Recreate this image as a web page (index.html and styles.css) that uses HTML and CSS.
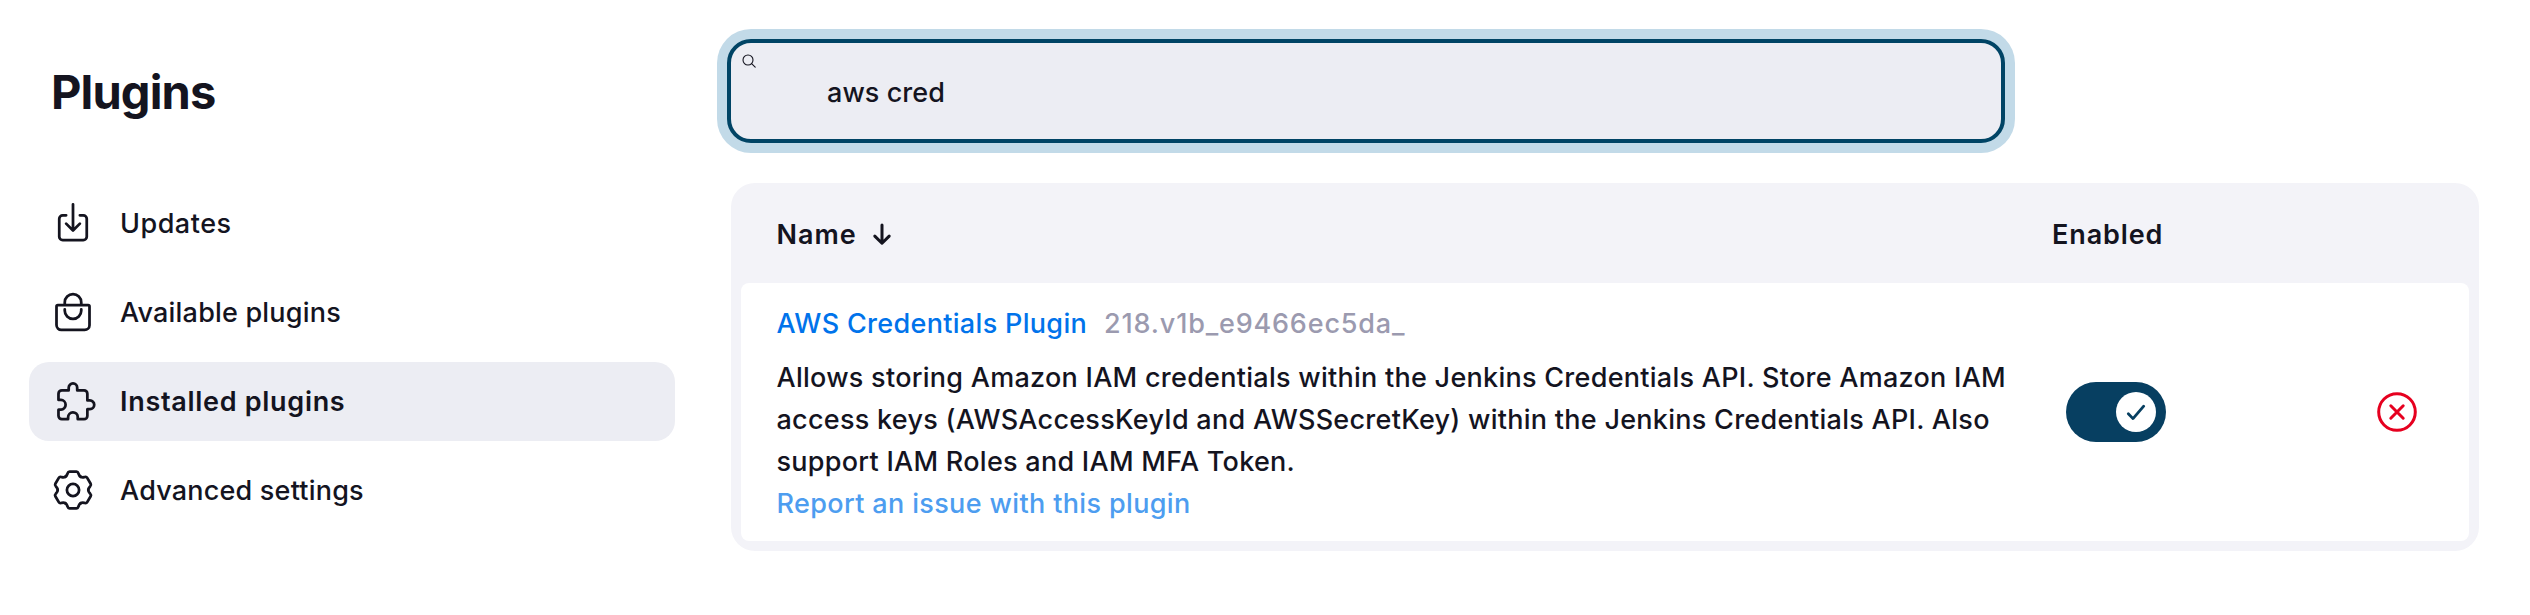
FILE: index.html
```html
<!DOCTYPE html>
<html lang="en">
<head>
<meta charset="utf-8">
<title>Plugins</title>
<link rel="stylesheet" href="styles.css">
</head>
<body>
<div class="page">
  <aside class="sidebar">
    <h1 class="sidebar-title">Plugins</h1>
    <nav class="tasks">
      <a class="task task-updates">
        <svg class="task-icon" viewBox="0 0 512 512"><g transform="translate(0 -9)"><path d="M336 176h40a40 40 0 0140 40v208a40 40 0 01-40 40H136a40 40 0 01-40-40V216a40 40 0 0140-40h40"/><path d="M176 272l80 80 80-80M256 48v288"/></g></svg>
        <span class="task-label">Updates</span>
      </a>
      <a class="task">
        <svg class="task-icon" viewBox="0 0 512 512"><path d="M80 176a16 16 0 00-16 16v216c0 30.24 25.76 56 56 56h272c30.24 0 56-24.51 56-54.75V192a16 16 0 00-16-16zM160 176v-32a96 96 0 0196-96h0a96 96 0 0196 96v32"/><path d="M160 224v16a96 96 0 0096 96h0a96 96 0 0096-96v-16"/></svg>
        <span class="task-label">Available plugins</span>
      </a>
      <a class="task task-active">
        <svg class="task-icon" viewBox="0 0 512 512"><path transform="translate(39 4)" d="M413.66 246.1H386a2 2 0 01-2-2v-77.24A38.86 38.86 0 00345.14 128H267.9a2 2 0 01-2-2V98.34c0-27.14-21.5-49.86-48.64-50.33a49.53 49.53 0 00-50.4 49.51V126a2 2 0 01-2 2H87.62A39.74 39.74 0 0048 167.62V238a2 2 0 002 2h26.91c29.37 0 53.68 25.48 54.09 54.85.42 29.87-23.51 57.15-53.29 57.15H50a2 2 0 00-2 2v70.38A39.74 39.74 0 0087.62 464H158a2 2 0 002-2v-20.93c0-30.28 24.75-56.35 55-57.06 30.1-.7 57 20.31 57 50.28V462a2 2 0 002 2h71.14A38.86 38.86 0 00384 425.14v-78a2 2 0 012-2h28.48c27.63 0 49.52-22.67 49.52-50.4s-23.2-48.64-50.34-48.64z"/></svg>
        <span class="task-label">Installed plugins</span>
      </a>
      <a class="task">
        <svg class="task-icon" viewBox="-256 -256 512 512">
          <circle r="71"/>
          <path id="tooth" d="M-89 -154C-70 -165 -68 -178 -63 -194C-58 -211 -50 -214 -40 -214H40C50 -214 58 -211 63 -194C68 -178 70 -165 89 -154"/>
          <use href="#tooth" transform="rotate(60)"/>
          <use href="#tooth" transform="rotate(120)"/>
          <use href="#tooth" transform="rotate(180)"/>
          <use href="#tooth" transform="rotate(240)"/>
          <use href="#tooth" transform="rotate(300)"/>
        </svg>
        <span class="task-label">Advanced settings</span>
      </a>
    </nav>
  </aside>

  <main class="main">
    <div class="search">
      <svg class="search-icon" viewBox="0 0 14 14"><circle cx="6" cy="6" r="5"/><path d="M9.6 9.6L13.2 13.2"/></svg>
      <input class="search-input" type="text" value="aws cred" aria-label="Search">
    </div>

    <section class="table">
      <header class="table-head">
        <div class="head-name">
          <span class="name-label">Name</span>
          <svg class="sort-icon" viewBox="0 0 20 24"><path d="M10 2v18M2.8 13.1L10 20.3L17.2 13.1"/></svg>
        </div>
        <div class="head-enabled">Enabled</div>
      </header>
      <div class="table-row">
        <div class="plugin">
          <div class="plugin-title">
            <a class="plugin-link">AWS Credentials Plugin</a>
            <span class="plugin-version">218.v1b_e9466ec5da_</span>
          </div>
          <div class="plugin-description">Allows storing Amazon IAM credentials within the Jenkins Credentials API. Store Amazon IAM<br>access keys (AWSAccessKeyId and AWSSecretKey) within the Jenkins Credentials API. Also<br>support IAM Roles and IAM MFA Token.</div>
          <a class="report-link">Report an issue with this plugin</a>
        </div>
        <div class="toggle">
          <span class="toggle-knob">
            <svg class="toggle-check" viewBox="0 0 40 40"><path d="M12.3 21.7L17 26.6L27.7 14.2"/></svg>
          </span>
        </div>
        <svg class="remove-icon" viewBox="0 0 40 40"><circle cx="20" cy="20" r="18.3"/><path d="M13.8 13.8L26.2 26.2M26.2 13.8L13.8 26.2"/></svg>
      </div>
    </section>
  </main>
</div>
</body>
</html>
```

FILE: styles.css
```css
* {
  box-sizing: border-box;
}

body {
  margin: 0;
  background: #fff;
  color: #14141f;
  font: 500 27px/42px Inter, "Liberation Sans", sans-serif;
  letter-spacing: 0.27px;
}

.page {
  display: flex;
  gap: 52px;
  padding-left: 29px;
}

/* Sidebar */
.sidebar {
  width: 646px;
  padding-top: 64px;
}

.sidebar-title {
  margin: 0 0 64px;
  padding-left: 22px;
  font-size: 47px;
  font-weight: 700;
  line-height: 56px;
  letter-spacing: -0.86px;
}

.tasks {
  display: flex;
  flex-direction: column;
  gap: 10px;
}

.task {
  display: flex;
  align-items: center;
  gap: 25px;
  height: 79px;
  padding-left: 22px;
  border-radius: 20px;
  letter-spacing: 0.2px;
}

.task-updates {
  letter-spacing: 0.5px;
}

.task-active {
  background: #ecedf3;
  font-weight: 600;
  letter-spacing: 0.7px;
}

.task-label {
  padding-top: 1px;
}

.task-icon {
  width: 44px;
  height: 44px;
  margin-bottom: 1px;
  overflow: visible;
  fill: none;
  stroke: currentColor;
  stroke-width: 32;
  stroke-linecap: round;
  stroke-linejoin: round;
}

/* Search field */
.main {
  padding-top: 39px;
}

.search {
  position: relative;
  width: 1278px;
  height: 104px;
  margin-bottom: 40px;
}

.search-input {
  display: block;
  width: 100%;
  height: 100%;
  padding: 2px 20px 0 96px;
  border: 4px solid #004465;
  border-radius: 24px;
  outline: none;
  background: #ecedf3;
  box-shadow: 0 0 0 10px #c2dae8;
  color: inherit;
  font: inherit;
  letter-spacing: 0.05px;
}

.search-icon {
  position: absolute;
  top: 15px;
  left: 15px;
  width: 14px;
  height: 14px;
  fill: none;
  stroke: currentColor;
  stroke-width: 1.1;
  stroke-linecap: round;
}

/* Plugin table */
.table {
  width: 1748px;
  margin-left: 4px;
  padding: 0 10px 10px;
  border-radius: 24px;
  background: #f3f3f8;
}

.table-head,
.table-row {
  display: grid;
  grid-template-columns: 1275px 325px 40px;
  align-items: center;
  padding-left: 35.5px;
}

.table-head {
  height: 100px;
  padding-top: 3px;
  font-weight: 600;
}

.head-name {
  display: flex;
  align-items: center;
  gap: 15.5px;
}

.name-label {
  letter-spacing: 0.95px;
}

.head-enabled {
  padding-left: 0.5px;
  letter-spacing: 0.88px;
}

.sort-icon {
  width: 20px;
  height: 24px;
  fill: none;
  stroke: currentColor;
  stroke-width: 3;
  stroke-linecap: round;
  stroke-linejoin: round;
}

.table-row {
  height: 258px;
  border-radius: 8px;
  background: #fff;
}

.plugin {
  padding-top: 4px;
  white-space: nowrap;
}

.plugin-title {
  display: flex;
  gap: 17px;
  margin-bottom: 12px;
}

.plugin-link {
  color: #0073eb;
  letter-spacing: 0.32px;
}

.plugin-version {
  color: #9b9aaf;
  letter-spacing: 0.82px;
}

.report-link {
  display: block;
  color: #4d9df0;
  letter-spacing: 0.36px;
}

.toggle {
  display: flex;
  justify-content: flex-end;
  width: 100px;
  height: 60px;
  margin-left: 14.5px;
  padding: 10px;
  border-radius: 30px;
  background: #073f61;
}

.toggle-knob {
  width: 40px;
  height: 40px;
  border-radius: 50%;
  background: #fff;
}

.toggle-check,
.remove-icon {
  display: block;
  width: 40px;
  height: 40px;
  fill: none;
  stroke: #073f61;
  stroke-width: 2.8;
  stroke-linecap: round;
  stroke-linejoin: round;
}

.remove-icon {
  margin-left: 0.5px;
  stroke: #e6001f;
  stroke-width: 3;
}
```
